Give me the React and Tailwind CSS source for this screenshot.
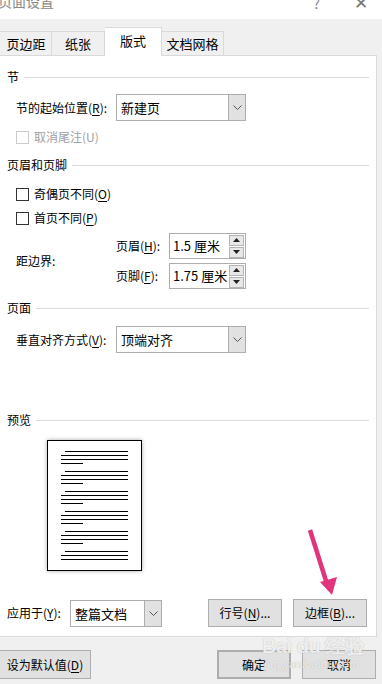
import React from 'react';

const Ul = ({ children }) => <span className="underline underline-offset-2">{children}</span>;

const Section = ({ title, className = '' }) => (
  <div className={`flex items-center h-4 pl-[7px] pr-[7px] ${className}`}>
    <span className="leading-4">{title}</span>
    <div className="flex-1 h-px bg-[#dcdcdc] ml-[5px]" />
  </div>
);

const Chevron = () => (
  <svg width="9" height="5" viewBox="0 0 9 5" className="block">
    <path d="M0.5 0.5 L4.5 4.5 L8.5 0.5" fill="none" stroke="#555" strokeWidth="1" />
  </svg>
);

const Select = ({ value, className = '' }) => (
  <div className={`flex h-[27px] border border-[#adadad] bg-white ${className}`}>
    <span className="flex-1 pl-[4px] leading-[25px] text-[13px]">{value}</span>
    <div className="w-[17px] bg-[#e1e1e1] border-l border-[#adadad] flex items-center justify-center">
      <Chevron />
    </div>
  </div>
);

const SpinBtn = ({ up }) => (
  <div className="w-[15px] h-[11px] bg-[#e8e8e8] border border-[#b4b4b4] flex items-center justify-center">
    <svg width="7" height="4" viewBox="0 0 7 4" className="block">
      <path d={up ? 'M0 4 L3.5 0 L7 4 Z' : 'M0 0 L3.5 4 L7 0 Z'} fill="#222" />
    </svg>
  </div>
);

const Spin = ({ value }) => (
  <div className="flex h-[26px] w-[77px] border border-[#adadad] bg-white items-center">
    <span className="flex-1 pl-[3px] text-[13px] leading-[24px]">{value}</span>
    <div className="flex flex-col gap-px mr-[1px]">
      <SpinBtn up />
      <SpinBtn />
    </div>
  </div>
);

const Check = ({ label, disabled }) => (
  <div className="flex items-center h-4 pl-[16px]">
    <div className={`w-[13px] h-[13px] border ${disabled ? 'border-[#cccccc]' : 'border-[#333333]'} bg-white`} />
    <span className={`ml-[5px] leading-4 ${disabled ? 'text-[#a0a0a0]' : ''}`}>{label}</span>
  </div>
);

const Button = ({ children, className = '' }) => (
  <div className={`h-[28px] flex items-center justify-center bg-[#e1e1e1] border border-[#adadad] ${className}`}>
    {children}
  </div>
);

const PreviewPage = () => {
  const groups = [4, 4, 4, 4, 4, 3];
  return (
    <div className="ml-[47px] w-[95px] h-[131px] border border-black bg-white shadow-[0_0_4px_rgba(0,0,0,0.35)] pt-[10px] pl-[13px] pr-[13px] flex flex-col gap-[7px]">
      {groups.map((n, gi) => (
        <div key={gi} className="flex flex-col gap-[3px]">
          {Array.from({ length: n }).map((_, i) => (
            <div
              key={i}
              className={`h-px bg-black ${i === 0 ? 'ml-[4px]' : ''} ${i === 3 ? 'w-[22px]' : ''}`}
            />
          ))}
        </div>
      ))}
    </div>
  );
};

export default function App() {
  return (
    <div className="relative w-[382px] h-[684px] overflow-hidden bg-[#f0f0f0] text-[12px] text-black [font-family:'Microsoft_YaHei','Noto_Sans_CJK_SC',sans-serif]">
      {/* title bar */}
      <div className="h-[19px] bg-white flex items-start">
        <span className="ml-[-2px] mt-[-9px] text-[14px] leading-[20px] text-[#888]">页面设置</span>
        <span className="ml-auto mt-[-7px] text-[14px] leading-[20px] text-[#888]">?</span>
        <span className="ml-[34px] mr-[14px] mt-[-8px] text-[17px] leading-[20px] text-[#777] font-light">✕</span>
      </div>

      {/* tabs */}
      <div className="flex items-end h-[37px] relative z-10 mb-[-1px]">
        <div className="ml-[-1px] w-[53px] h-[25px] border border-[#d9d9d9] border-b-0 flex items-center justify-center pl-[1px] text-[13px]">页边距</div>
        <div className="w-[53px] h-[25px] border border-[#d9d9d9] border-b-0 border-l-0 flex items-center justify-center text-[13px]">纸张</div>
        <div className="w-[57px] h-[29px] border border-[#d9d9d9] border-b-0 border-l-0 bg-white flex items-center justify-center pb-[2px] text-[13px]">版式</div>
        <div className="w-[62px] h-[25px] border border-[#d9d9d9] border-b-0 border-l-0 flex items-center justify-center text-[13px]">文档网格</div>
      </div>

      {/* panel */}
      <div className="ml-[-1px] w-[378px] h-[582px] border border-[#d9d9d9] bg-white flex flex-col">
        <Section title="节" className="mt-[13px]" />
        <div className="flex items-center mt-[9px] pl-[16px]">
          <span className="w-[100px]">节的起始位置(<Ul>R</Ul>):</span>
          <Select value="新建页" className="w-[130px]" />
        </div>
        <div className="mt-[8px]">
          <Check label="取消尾注(U)" disabled />
        </div>

        <Section title="页眉和页脚" className="mt-[12px]" />
        <div className="mt-[13px]">
          <Check label={<>奇偶页不同(<Ul>O</Ul>)</>} />
        </div>
        <div className="mt-[8px]">
          <Check label={<>首页不同(<Ul>P</Ul>)</>} />
        </div>
        <div className="flex items-center mt-[7px] pl-[16px]">
          <span className="w-[100px]">距边界:</span>
          <div className="flex flex-col gap-[4px]">
            <div className="flex items-center">
              <span className="w-[53px]">页眉(<Ul>H</Ul>):</span>
              <Spin value="1.5 厘米" />
            </div>
            <div className="flex items-center">
              <span className="w-[53px]">页脚(<Ul>F</Ul>):</span>
              <Spin value="1.75 厘米" />
            </div>
          </div>
        </div>

        <Section title="页面" className="mt-[11px]" />
        <div className="flex items-center mt-[10px] pl-[16px]">
          <span className="w-[100px]">垂直对齐方式(<Ul>V</Ul>):</span>
          <Select value="顶端对齐" className="w-[130px]" />
        </div>

        <Section title="预览" className="mt-[59px]" />
        <div className="mt-[12px]">
          <PreviewPage />
        </div>

        <div className="flex items-center mt-[28px] pl-[7px] pr-[9px]">
          <span className="w-[63px]">应用于(<Ul>Y</Ul>):</span>
          <Select value="整篇文档" className="w-[92px]" />
          <div className="ml-auto flex gap-[11px]">
            <Button className="w-[74px]">行号(<Ul>N</Ul>)...</Button>
            <Button className="w-[74px]">边框(<Ul>B</Ul>)...</Button>
          </div>
        </div>
      </div>

      {/* dialog buttons */}
      <div className="flex items-center justify-between mt-[13px] pr-[6px]">
        <Button className="ml-[-1px] w-[92px] h-[29px]">设为默认值(<Ul>D</Ul>)</Button>
        <div className="flex gap-[11px]">
          <Button className="w-[74px] h-[29px] border-2 border-[#0078d7]">确定</Button>
          <Button className="w-[74px] h-[29px]">取消</Button>
        </div>
      </div>

      {/* annotation arrow */}
      <svg className="absolute left-0 top-0 pointer-events-none" width="382" height="684">
        <line x1="310" y1="530" x2="327" y2="584" stroke="#e0357a" strokeWidth="4.5" />
        <path d="M320 582 L337 577 L332 595 Z" fill="#e0357a" />
      </svg>

      {/* watermark */}
      <div className="absolute left-[262px] top-[635px] pointer-events-none flex flex-col items-start text-white/80 [text-shadow:0_0_1px_rgba(120,120,120,0.6)]">
        <span className="text-[20px] leading-[22px] font-bold tracking-tight [font-family:'Liberation_Sans',sans-serif]">Bai du 经验</span>
        <span className="text-[11px] leading-[12px] ml-[2px]">jingyan.baidu.com</span>
      </div>
    </div>
  );
}
